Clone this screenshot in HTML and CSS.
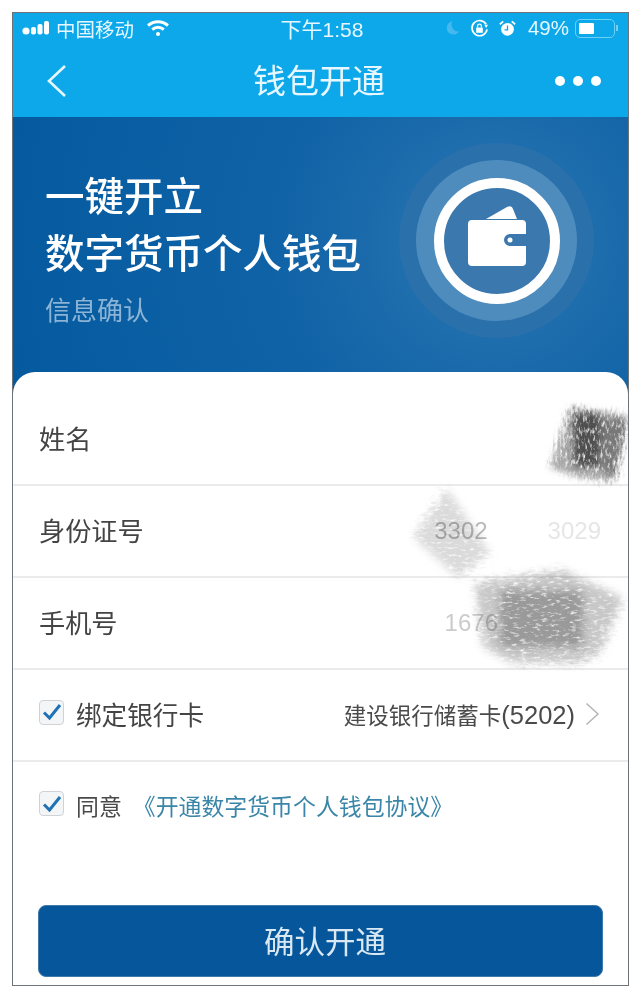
FILE: index.html
```html
<!DOCTYPE html>
<html lang="zh">
<head>
    <meta charset="utf-8">
    <title>钱包开通</title>
    <link rel="stylesheet" href="styles.css">
</head>
<body>

<div class="phone">
    <header class="top">
        <div class="status">
            <div class="status-left">
                <svg class="signal" width="28" height="16" viewBox="0 0 28 16">
                    <circle cx="4" cy="11" r="3.6" fill="#fff"/>
                    <rect x="9" y="7" width="5" height="7.5" rx="2" fill="#fff"/>
                    <rect x="15.5" y="4" width="5" height="10.5" rx="2" fill="#fff"/>
                    <rect x="22" y="1" width="5" height="13.5" rx="2" fill="#fff"/>
                </svg>
                <span>中国移动</span>
                <svg class="wifi" width="24" height="18" viewBox="0 0 24 18" fill="none" stroke="#fff" stroke-width="3">
                    <path d="M2 6.5c6-5 14-5 20 0"/>
                    <path d="M6.2 10.5c3.6-2.8 8-2.8 11.6 0"/>
                    <circle cx="12" cy="15" r="2" fill="#fff" stroke="none"/>
                </svg>
            </div>
            <div class="clock">下午1:58</div>
            <div class="status-right">
                <svg class="moon" width="15" height="18" viewBox="0 0 18 20"><path d="M9 2a8 8 0 1 0 8 12A8 8 0 0 1 9 2z" fill="#45b8ee"/></svg>
                <svg class="lock" width="19" height="19" viewBox="0 0 20 20" fill="none" stroke="#fff" stroke-width="1.8">
                    <path d="M17 5.5A8 8 0 1 0 18 11"/>
                    <path d="M15 6h4l-2 3.5z" fill="#fff" stroke="none"/>
                    <rect x="6.5" y="9" width="7" height="5.5" fill="#fff" stroke="none"/>
                    <path d="M8 9V7.5a2 2 0 0 1 4 0V9" stroke-width="1.3"/>
                </svg>
                <svg class="alarm" width="17" height="17" viewBox="0 0 20 20">
                    <circle cx="10" cy="11" r="7.5" fill="#fff"/>
                    <path d="M10 6.5V11.5H6.5" fill="none" stroke="#0ca8ea" stroke-width="1.5"/>
                    <path d="M1 5l4-3.5M19 5l-4-3.5" stroke="#fff" stroke-width="2"/>
                </svg>
                <span>49%</span>
                <div class="battery"><div class="battery-fill"></div></div>
                <div class="battery-tip"></div>
            </div>
        </div>
        <nav class="navbar">
            <svg class="back" width="20" height="34" viewBox="0 0 20 34" fill="none" stroke="#e6f7ff" stroke-width="2.6">
                <path d="M18 2 2 17l16 15"/>
            </svg>
            <h1>钱包开通</h1>
            <div class="more"><i></i><i></i><i></i></div>
        </nav>
    </header>

    <section class="hero">
        <div class="hero-text">
            <h2>一键开立<br>数字货币个人钱包</h2>
            <p>信息确认</p>
        </div>
        <div class="halo">
            <div class="halo-inner">
                <div class="ring">
                    <svg width="58" height="60" viewBox="0 0 58 60">
                        <path d="M18 13 39 1q5-2 6 2L49 13z" fill="#fff"/>
                        <path d="M4 14H54a4 4 0 0 1 4 4V28H42a6 6 0 0 0 0 12H58V56a4 4 0 0 1-4 4H4a4 4 0 0 1-4-4V18a4 4 0 0 1 4-4z" fill="#fff"/>
                        <circle cx="42" cy="34" r="2.5" fill="#fff"/>
                    </svg>
                </div>
            </div>
        </div>
    </section>

    <main class="card">
        <div class="row row-first"><span class="label">姓名</span></div>
        <div class="row">
            <span class="label">身份证号</span>
            <span class="blurred"><b>3302</b>&nbsp;&nbsp;&nbsp;&nbsp;&nbsp;&nbsp;&nbsp;&nbsp;&nbsp;3029</span>
        </div>
        <div class="row">
            <span class="label">手机号</span>
            <span class="blurred blurred-phone">1676</span>
        </div>
        <div class="row">
            <span class="check"><svg width="20" height="18" viewBox="0 0 20 18"><path d="M2 9.5 7.5 15 18 2" fill="none" stroke="#1f72b5" stroke-width="3"/></svg></span>
            <span class="label label-bind">绑定银行卡</span>
            <span class="bank">建设银行储蓄卡<span class="bank-num">(5202)</span></span>
            <svg class="chevron" width="15" height="24" viewBox="0 0 15 24" fill="none" stroke="#b5b5b5" stroke-width="1.5"><path d="M1.5 1.5 13 12 1.5 22.5"/></svg>
        </div>
        <div class="agree">
            <span class="check"><svg width="20" height="18" viewBox="0 0 20 18"><path d="M2 9.5 7.5 15 18 2" fill="none" stroke="#1f72b5" stroke-width="3"/></svg></span>
            <span class="agree-text">同意</span>
            <a class="agree-link">《开通数字货币个人钱包协议》</a>
        </div>
        <button class="confirm">确认开通</button>

        <!-- pencil scribbles over the personal data -->
        <svg class="scribbles" width="615" height="300" viewBox="0 0 615 300">
            <defs>
                <filter id="pencil-v" x="-10%" y="-10%" width="120%" height="120%">
                    <feTurbulence type="fractalNoise" baseFrequency="0.4 0.16" numOctaves="4" seed="4" result="noise"/>
                    <feGaussianBlur in="SourceGraphic" stdDeviation="3" result="soft"/>
                    <feDisplacementMap in="soft" in2="noise" scale="10" result="rough"/>
                    <feColorMatrix in="noise" type="matrix" values="0 0 0 0 0  0 0 0 0 0  0 0 0 0 0  2.6 0 0 0 -0.3" result="mask"/>
                    <feComposite in="rough" in2="mask" operator="in"/>
                    <feGaussianBlur stdDeviation="0.6"/>
                </filter>
                <filter id="pencil-h" x="-10%" y="-10%" width="120%" height="120%">
                    <feTurbulence type="fractalNoise" baseFrequency="0.14 0.4" numOctaves="4" seed="9" result="noise"/>
                    <feGaussianBlur in="SourceGraphic" stdDeviation="4" result="soft"/>
                    <feDisplacementMap in="soft" in2="noise" scale="10" result="rough"/>
                    <feColorMatrix in="noise" type="matrix" values="0 0 0 0 0  0 0 0 0 0  0 0 0 0 0  2.6 0 0 0 -0.2" result="mask"/>
                    <feComposite in="rough" in2="mask" operator="in"/>
                    <feGaussianBlur stdDeviation="0.6"/>
                </filter>
            </defs>
            <g filter="url(#pencil-v)">
                <path d="M557 35 615 43 600 110 567 106 537 96z" fill="#a8a8a8"/>
                <path d="M585 45 615 47 603 104 590 100z" fill="#787878"/>
                <path d="M560 41 587 41 587 95 560 95z" fill="#505050"/>
            </g>
            <g filter="url(#pencil-h)">
                <path d="M434 116 477 181 445 206 400 165z" fill="#dadada"/>
                <path d="M550 198 610 226 587 281 567 291 500 291 470 275 462 211z" fill="#c8c8c8"/>
                <path d="M487 218 570 218 570 275 487 275z" fill="#9a9a9a"/>
            </g>
        </svg>
    </main>
</div>

</body>
</html>
```

FILE: styles.css
```css
* {
    box-sizing: border-box;
}
html, body {
    margin: 0;
    background: #fff;
}
body {
    padding: 12px;
    font-family: "Liberation Sans", "Noto Sans CJK SC", sans-serif;
}
.phone {
    width: 617px;
    height: 974px;
    border: 1px solid #6f7478;
    display: flex;
    flex-direction: column;
    overflow: hidden;
    background: #fff;
}
.top {
    height: 104px;
    background: #0ca8ea;
    color: #e6f7ff;
}
.status {
    height: 32px;
    padding: 0 10px 2px 9px;
    display: flex;
    align-items: center;
    justify-content: space-between;
    font-size: 19.5px;
}
.status-left, .status-right {
    display: flex;
    align-items: center;
}
.status-left span {
    margin: 0 12px 0 6px;
}
.clock {
    font-size: 21px;
    margin-left: 29px;
}
.status-right svg {
    margin-right: 10px;
}
.status-right .alarm {
    margin-right: 12px;
}
.status-right span {
    font-size: 20.5px;
}
.battery {
    width: 40px;
    height: 19px;
    margin-left: 6px;
    padding: 3px;
    border: 1px solid #6fd0f5;
    border-radius: 5px;
}
.battery-fill {
    width: 48%;
    height: 100%;
    background: #fff;
    border-radius: 1px;
}
.battery-tip {
    width: 2px;
    height: 6px;
    margin-left: 1px;
    background: #6fd0f5;
}
.navbar {
    height: 72px;
    padding: 0 27px;
    display: grid;
    grid-template-columns: 1fr auto 1fr;
    align-items: center;
}
.back {
    margin-left: 7px;
}
.navbar h1 {
    margin: 0 3px 0 0;
    font-size: 33px;
    font-weight: 400;
    line-height: 1;
}
.more {
    display: flex;
    gap: 8px;
    justify-self: end;
}
.more i {
    width: 10px;
    height: 10px;
    border-radius: 50%;
    background: #fff;
}
.hero {
    height: 277px;
    padding: 0 34px 22px 32px;
    display: flex;
    justify-content: space-between;
    align-items: center;
    background: radial-gradient(circle at 78% 45%, #2a76b2 0%, #0f62a6 45%, #055a9f 100%);
    color: #fff;
}
.hero-text {
    margin-top: 9px;
}
.hero h2 {
    margin: 0;
    font-size: 39.5px;
    font-weight: 500;
    line-height: 57px;
}
.hero p {
    margin: 10px 0 0;
    font-size: 26px;
    line-height: 36px;
    color: #8cb4d6;
}
.halo {
    width: 195px;
    height: 195px;
    margin-top: -8px;
    border-radius: 50%;
    background: #2a71ac;
    display: flex;
    align-items: center;
    justify-content: center;
}
.halo-inner {
    width: 161px;
    height: 161px;
    border-radius: 50%;
    background: #4f8cbe;
    display: flex;
    align-items: center;
    justify-content: center;
}
.ring {
    width: 126px;
    height: 126px;
    padding-bottom: 10px;
    border: 10px solid #fff;
    border-radius: 50%;
    background: #3b78ad;
    display: flex;
    align-items: center;
    justify-content: center;
}
.card {
    flex: 1;
    position: relative;
    margin-top: -22px;
    background: #fff;
    border-radius: 22px 22px 0 0;
}
.row {
    height: 92px;
    padding: 0 28px 3px 26px;
    display: flex;
    align-items: center;
    border-bottom: 2px solid #ebebeb;
}
.row-first {
    height: 114px;
    padding-top: 21px;
    padding-bottom: 2px;
}
.label {
    font-size: 26.2px;
    color: #444;
}
.label-bind {
    margin-left: 12px;
    font-size: 25.6px;
}
.blurred {
    position: absolute;
    right: 27px;
    top: 145px;
    font-size: 24px;
    color: #e6e6e6;
}
.blurred b {
    font-weight: 400;
    color: #bbb;
}
.blurred-phone {
    right: 130px;
    top: 237px;
    color: #ccc;
}
.check {
    width: 25px;
    height: 25px;
    margin-bottom: 3px;
    border: 1px solid #cfd3d8;
    border-radius: 4px;
    background: #f3f5f7;
    display: flex;
    align-items: center;
    justify-content: center;
}
.bank {
    margin-left: auto;
    font-size: 22.5px;
    color: #4a4a4a;
}
.bank-num {
    font-size: 25.5px;
}
.chevron {
    margin-left: 10px;
}
.agree {
    height: 90px;
    padding: 0 26px 4px;
    display: flex;
    align-items: center;
}
.agree-text {
    margin-left: 12px;
    font-size: 22.9px;
    color: #4a4a4a;
}
.agree-link {
    margin-left: 11px;
    font-size: 22.9px;
    color: #3b86a8;
}
.confirm {
    display: block;
    width: 565px;
    height: 72px;
    margin: 53px 0 0 25px;
    padding: 0 0 2px 9px;
    border: 1px solid #3f7aa8;
    border-radius: 8px;
    background: #05569b;
    color: #d9e8f2;
    font-family: inherit;
    font-size: 30.5px;
}
.scribbles {
    position: absolute;
    top: 0;
    left: 0;
    pointer-events: none;
    mix-blend-mode: multiply;
}
```
